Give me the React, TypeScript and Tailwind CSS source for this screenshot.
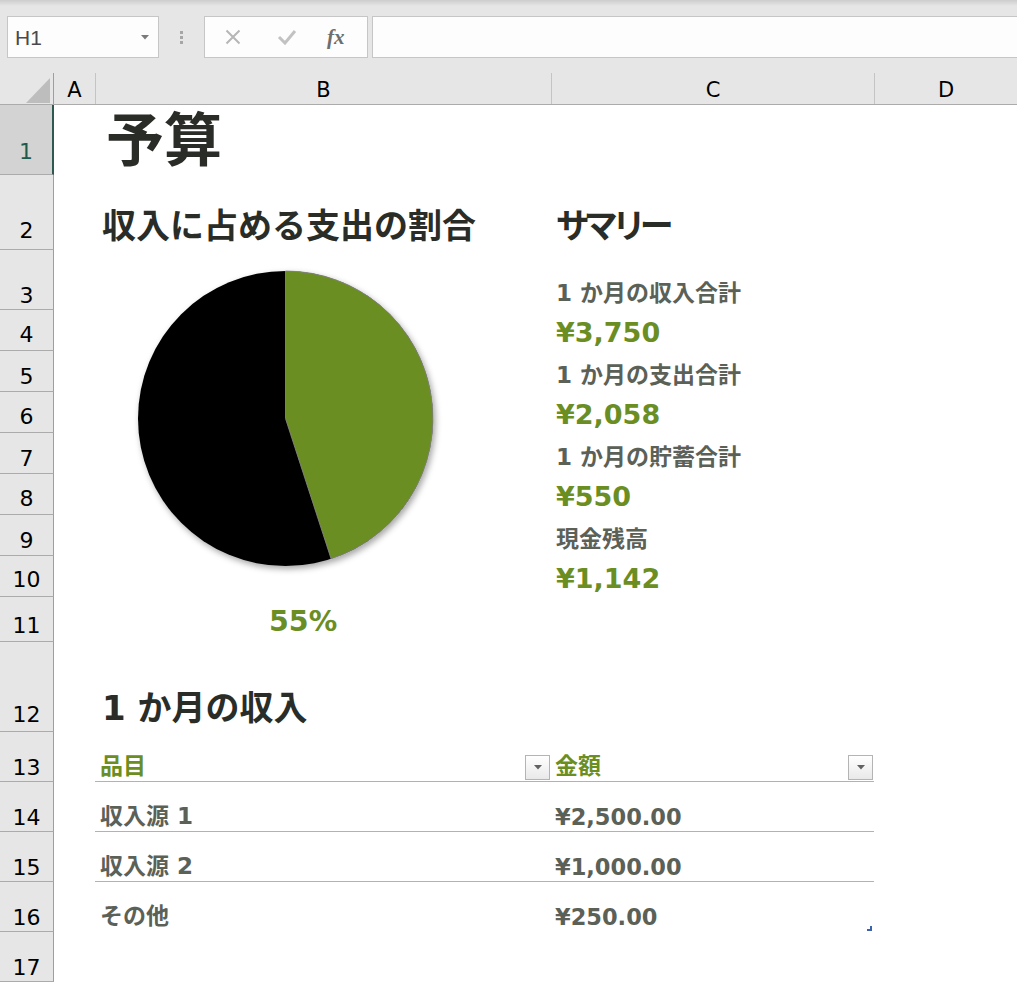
import React from 'react';

const rowHeads = [
  { n: 1, h: 'h-[70px]', pb: 'pb-[11px]' },
  { n: 2, h: 'h-[75px]', pb: 'pb-[7px]' },
  { n: 3, h: 'h-[60px]', pb: 'pb-[2px]' },
  { n: 4, h: 'h-[41px]', pb: 'pb-[4px]' },
  { n: 5, h: 'h-[41px]', pb: 'pb-[3px]' },
  { n: 6, h: 'h-[41px]', pb: 'pb-[4px]' },
  { n: 7, h: 'h-[41px]', pb: 'pb-[3px]' },
  { n: 8, h: 'h-[41px]', pb: 'pb-[4px]' },
  { n: 9, h: 'h-[41px]', pb: 'pb-[3px]' },
  { n: 10, h: 'h-[41px]', pb: 'pb-[5px]' },
  { n: 11, h: 'h-[45px]', pb: 'pb-[4px]' },
  { n: 12, h: 'h-[90px]', pb: 'pb-[5px]' },
  { n: 13, h: 'h-[50px]', pb: 'pb-[2px]' },
  { n: 14, h: 'h-[50px]', pb: 'pb-[2px]' },
  { n: 15, h: 'h-[50px]', pb: 'pb-[2px]' },
  { n: 16, h: 'h-[50px]', pb: 'pb-[2px]' },
  { n: 17, h: 'h-[50px]', pb: 'pb-[2px]' },
];

const summary = [
  { label: '1 か月の収入合計', value: '¥3,750' },
  { label: '1 か月の支出合計', value: '¥2,058' },
  { label: '1 か月の貯蓄合計', value: '¥550' },
  { label: '現金残高', value: '¥1,142' },
];

function FilterButton() {
  return (
    <div className="w-[25px] h-[25px] border border-[#b4b4b4] bg-gradient-to-b from-white to-[#e9e9e9] flex items-center justify-center">
      <svg width="8" height="5" viewBox="0 0 8 5">
        <path d="M0 0 L8 0 L4 4.5 Z" fill="#626262" />
      </svg>
    </div>
  );
}

function PieChart() {
  return (
    <svg width="456" height="346" viewBox="0 0 456 346">
      <defs>
        <filter id="pieShadow" x="-10%" y="-10%" width="125%" height="125%">
          <feDropShadow dx="2" dy="3" stdDeviation="3" floodColor="#000" floodOpacity="0.35" />
        </filter>
      </defs>
      <g filter="url(#pieShadow)">
        <circle cx="190.5" cy="168.5" r="147.5" fill="#000" />
        <path
          d="M190.5 168.5 L190.5 21 A147.5 147.5 0 0 1 236.08 308.78 Z"
          fill="#6b8e23"
          stroke="#858585"
          strokeWidth="0.9"
        />
      </g>
    </svg>
  );
}

export default function App() {
  return (
    <div className="w-[1017px] h-[983px] overflow-hidden bg-white font-['DejaVu_Sans','Noto_Sans_CJK_JP',sans-serif]">
      {/* formula bar */}
      <div className="h-[73px] bg-[#e6e6e6] flex flex-col">
        <div className="h-[6px] bg-gradient-to-b from-[#cdcdcd] to-[#e6e6e6]" />
        <div className="flex items-start pt-[10px]">
          <div className="ml-[7px] w-[152px] h-[42px] bg-[#fdfdfd] border border-[#c6c6c6] flex items-center justify-between pl-[7px] pr-[9px]">
            <span className="font-['Liberation_Sans',sans-serif] text-[21px] text-[#4a4a4a] leading-none">H1</span>
            <svg width="8" height="5" viewBox="0 0 8 5">
              <path d="M0 0 L8 0 L4 4.5 Z" fill="#7a7a7a" />
            </svg>
          </div>
          <div className="w-[45px] h-[42px] flex flex-col items-center justify-center gap-[2px]">
            <span className="w-[3px] h-[3px] bg-[#a6a6a6]" />
            <span className="w-[3px] h-[3px] bg-[#a6a6a6]" />
            <span className="w-[3px] h-[3px] bg-[#a6a6a6]" />
          </div>
          <div className="w-[164px] h-[42px] bg-[#fdfdfd] border border-[#c6c6c6] flex items-center pl-[20px]">
            <svg width="16" height="16" viewBox="0 0 16 16">
              <path d="M1.5 1.5 L14.5 14.5 M14.5 1.5 L1.5 14.5" stroke="#b6b6b6" strokeWidth="2" />
            </svg>
            <svg width="20" height="16" viewBox="0 0 20 16" className="ml-[36px]">
              <path d="M2 8 L8 14 L18 2" stroke="#c2c2c2" strokeWidth="3" fill="none" />
            </svg>
            <span className="ml-[30px] font-['Liberation_Serif',serif] italic font-bold text-[21px] text-[#6e6e6e] leading-none">fx</span>
          </div>
          <div className="ml-[4px] flex-1 h-[42px] bg-[#fdfdfd] border border-[#c6c6c6] border-r-0" />
        </div>
      </div>

      {/* column headers */}
      <div className="h-[32px] flex bg-[#e6e6e6] border-b border-[#ababab] text-[21px] leading-none text-black">
        <div className="w-[54px] border-r border-[#9e9e9e] flex items-end justify-end pr-[3px] pb-[1px]">
          <svg width="24" height="25" viewBox="0 0 24 25">
            <path d="M24 0 L24 25 L0 25 Z" fill="#bdbdbd" />
          </svg>
        </div>
        <div className="w-[42px] border-r border-[#c4c4c4] flex items-end justify-center pb-[3px]">A</div>
        <div className="w-[456px] border-r border-[#c4c4c4] flex items-end justify-center pb-[3px]">B</div>
        <div className="w-[323px] border-r border-[#c4c4c4] flex items-end justify-center pb-[3px]">C</div>
        <div className="flex-1 flex items-end justify-center pb-[3px]">D</div>
      </div>

      <div className="flex">
        {/* row headers */}
        <div className="w-[54px] flex flex-col">
          {rowHeads.map((r) =>
            r.n === 1 ? (
              <div
                key={r.n}
                className={`${r.h} ${r.pb} bg-[#d3d3d3] border-b border-[#ababab] border-r-2 border-r-[#2c5a50] flex items-end justify-center text-[22px] leading-none text-[#1f5a4d]`}
              >
                {r.n}
              </div>
            ) : (
              <div
                key={r.n}
                className={`${r.h} ${r.pb} bg-[#e6e6e6] border-b border-[#ababab] border-r border-r-[#9e9e9e] flex items-end justify-center text-[22px] leading-none text-black`}
              >
                {r.n}
              </div>
            )
          )}
          <div className="flex-1 bg-[#e6e6e6] border-r border-[#9e9e9e]" />
        </div>

        {/* sheet */}
        <div className="w-[963px] grid grid-cols-[41px_456px_323px_1fr] grid-rows-[70px_75px_60px_41px_41px_41px_41px_41px_41px_41px_45px_90px_50px_50px_50px_50px_50px] whitespace-nowrap">
          <div className="row-start-1 col-start-2 flex items-end pl-[11px] pb-[5px]">
            <span className="text-[58px] leading-none font-bold text-[#2a2d27]">予算</span>
          </div>

          <div className="row-start-2 col-start-2 flex items-end pl-[7px] pb-[7px]">
            <span className="text-[34px] leading-none font-bold text-[#2a2d27]">収入に占める支出の割合</span>
          </div>
          <div className="row-start-2 col-start-3 flex items-end pl-[5px] pb-[7px]">
            <span className="text-[34px] leading-none font-bold text-[#2a2d27] tracking-[-3px] [font-feature-settings:'palt']">サマリー</span>
          </div>

          <div className="row-start-3 row-span-8 col-start-2">
            <PieChart />
          </div>

          <div className="row-start-3 col-start-3 flex items-end pl-[5px] pb-[5px]">
            <span className="text-[23px] leading-none font-bold text-[#5b6157]">{summary[0].label}</span>
          </div>
          <div className="row-start-4 col-start-3 flex items-end pl-[5px] pb-[5px]">
            <span className="text-[27px] leading-none font-bold text-[#6b8e23]">{summary[0].value}</span>
          </div>
          <div className="row-start-5 col-start-3 flex items-end pl-[5px] pb-[5px]">
            <span className="text-[23px] leading-none font-bold text-[#5b6157]">{summary[1].label}</span>
          </div>
          <div className="row-start-6 col-start-3 flex items-end pl-[5px] pb-[5px]">
            <span className="text-[27px] leading-none font-bold text-[#6b8e23]">{summary[1].value}</span>
          </div>
          <div className="row-start-7 col-start-3 flex items-end pl-[5px] pb-[5px]">
            <span className="text-[23px] leading-none font-bold text-[#5b6157]">{summary[2].label}</span>
          </div>
          <div className="row-start-8 col-start-3 flex items-end pl-[5px] pb-[5px]">
            <span className="text-[27px] leading-none font-bold text-[#6b8e23]">{summary[2].value}</span>
          </div>
          <div className="row-start-9 col-start-3 flex items-end pl-[5px] pb-[5px]">
            <span className="text-[23px] leading-none font-bold text-[#5b6157]">{summary[3].label}</span>
          </div>
          <div className="row-start-10 col-start-3 flex items-end pl-[5px] pb-[5px]">
            <span className="text-[27px] leading-none font-bold text-[#6b8e23]">{summary[3].value}</span>
          </div>

          <div className="row-start-11 col-start-2 flex items-end pl-[174px] pb-[6px]">
            <span className="text-[28.5px] leading-none font-bold text-[#6b8e23]">55%</span>
          </div>

          <div className="row-start-12 col-start-2 flex items-end pl-[7px] pb-[7px]">
            <span className="text-[34px] leading-none font-bold text-[#2a2d27]">1 か月の収入</span>
          </div>

          {/* income table */}
          <div className="row-start-13 col-start-2 border-b border-[#b3b3a7] flex items-end justify-between pl-[5px] pr-[1px]">
            <span className="pb-[3px] text-[23px] leading-none font-bold text-[#6b8e23]">品目</span>
            <div className="mb-[1px]">
              <FilterButton />
            </div>
          </div>
          <div className="row-start-13 col-start-3 border-b border-[#b3b3a7] flex items-end justify-between pl-[4px] pr-[1px]">
            <span className="pb-[3px] text-[23px] leading-none font-bold text-[#6b8e23]">金額</span>
            <div className="mb-[1px]">
              <FilterButton />
            </div>
          </div>

          <div className="row-start-14 col-start-2 border-b border-[#b3b3a7] flex items-end pl-[5px] pb-[3px]">
            <span className="text-[23px] leading-none font-bold text-[#5b6157]">収入源 1</span>
          </div>
          <div className="row-start-14 col-start-3 border-b border-[#b3b3a7] flex items-end pl-[4px] pb-[3px]">
            <span className="text-[22.5px] leading-none font-bold text-[#5b6157]">¥2,500.00</span>
          </div>

          <div className="row-start-15 col-start-2 border-b border-[#b3b3a7] flex items-end pl-[5px] pb-[3px]">
            <span className="text-[23px] leading-none font-bold text-[#5b6157]">収入源 2</span>
          </div>
          <div className="row-start-15 col-start-3 border-b border-[#b3b3a7] flex items-end pl-[4px] pb-[3px]">
            <span className="text-[22.5px] leading-none font-bold text-[#5b6157]">¥1,000.00</span>
          </div>

          <div className="row-start-16 col-start-2 flex items-end pl-[5px] pb-[4px]">
            <span className="text-[23px] leading-none font-bold text-[#5b6157]">その他</span>
          </div>
          <div className="row-start-16 col-start-3 flex items-end justify-between pl-[4px]">
            <span className="pb-[4px] text-[22.5px] leading-none font-bold text-[#5b6157]">¥250.00</span>
            <svg width="5" height="5" viewBox="0 0 5 5" className="mr-[2px] mb-[1px]">
              <rect x="3" y="0" width="2" height="5" fill="#3d62ad" />
              <rect x="0" y="3" width="5" height="2" fill="#3d62ad" />
            </svg>
          </div>
        </div>
      </div>
    </div>
  );
}
